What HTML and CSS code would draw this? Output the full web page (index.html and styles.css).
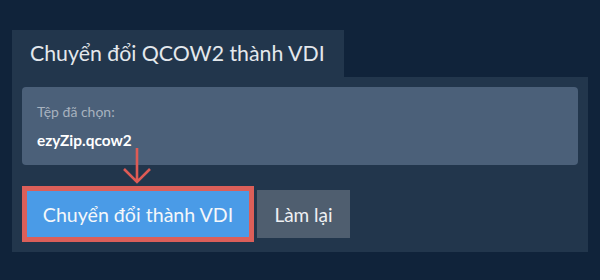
FILE: index.html
```html
<!DOCTYPE html>
<html lang="vi">
<head>
    <meta charset="UTF-8">
    <title>Chuyển đổi QCOW2 thành VDI</title>
    <link rel="stylesheet" href="styles.css">
</head>
<body>
    <!-- Tab header -->
    <div class="tab">Chuyển đổi QCOW2 thành VDI</div>

    <!-- Panel -->
    <div class="panel">
        <div class="file-box">
            <div class="file-label">Tệp đã chọn:</div>
            <div class="file-name">ezyZip.qcow2</div>
        </div>

        <div class="actions">
            <svg class="arrow" width="32" height="38" viewBox="0 0 32 38">
                <path d="M15 1 V34 M2 22 L15 35 L28 22" fill="none" stroke="#de5b55" stroke-width="2.6"/>
            </svg>
            <button class="btn btn-convert">Chuyển đổi thành VDI</button>
            <button class="btn btn-reset">Làm lại</button>
        </div>
    </div>
</body>
</html>
```

FILE: styles.css
```css
* { margin: 0; padding: 0; box-sizing: border-box; font-family: Lato, "Noto Sans", sans-serif; }
body { background: #10233a; padding: 30px 12px 0 12px; height: 280px; overflow: hidden; }

/* Tab */
.tab { display: inline-block; background: #22364c; color: #e4e8ec; font-size: 21.3px; height: 47px; line-height: 46px; padding: 0 19px 0 18px; }

/* Panel */
.panel { background: #22364c; padding: 10px; }
.file-box { background: #4b6079; border-radius: 4px; height: 78px; padding: 16px 15px 0 15px; }
.file-label { color: #a7b2bf; font-size: 14px; line-height: 18px; }
.file-name { color: #ffffff; font-size: 15.4px; font-weight: bold; line-height: 20px; margin-top: 9px; }

/* Buttons */
.actions { position: relative; display: flex; align-items: center; gap: 3px; margin-top: 21px; }
.arrow { position: absolute; left: 100px; top: -39px; }
.btn { border: none; color: #f4f7fa; font-size: 19.6px; cursor: pointer; }
.btn-convert { background: #4a9be7; border: 5px solid #dc5f59; width: 232px; height: 56px; }
.btn-reset { background: #4f5e6f; color: #eef0f3; font-size: 19px; width: 93px; height: 48px; }
```
